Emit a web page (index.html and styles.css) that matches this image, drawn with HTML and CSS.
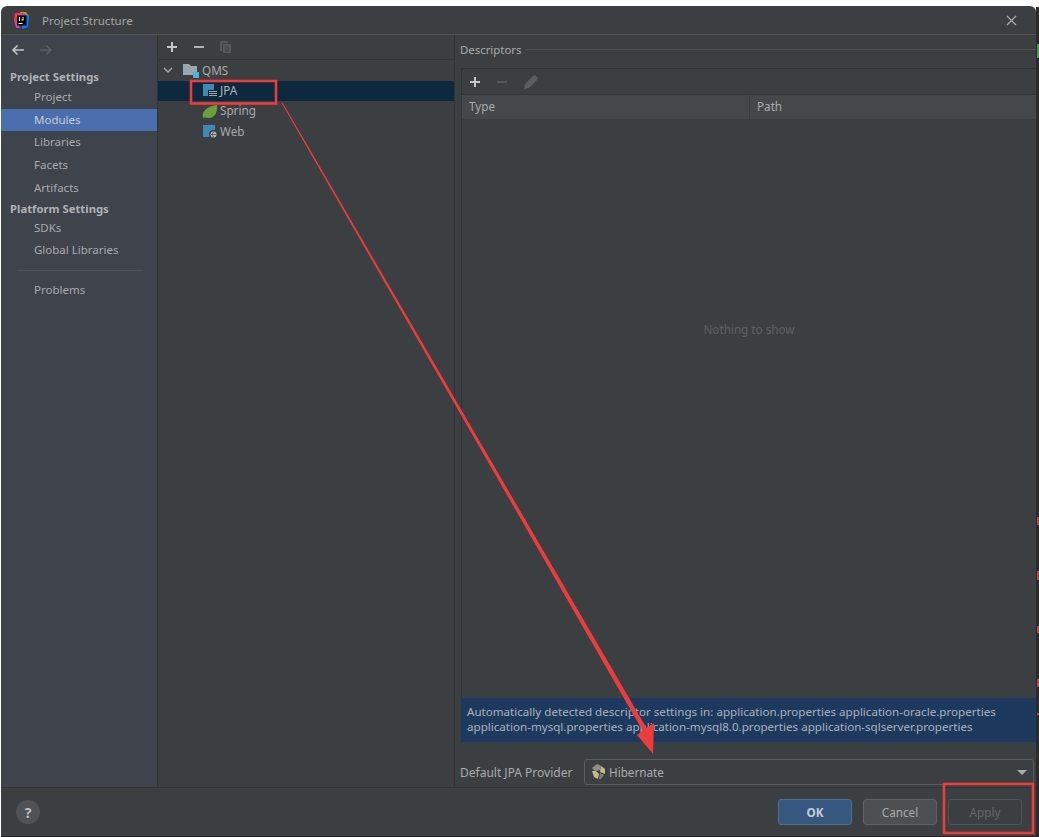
FILE: index.html
```html
<!DOCTYPE html>
<html lang="en">
<head>
<meta charset="utf-8">
<title>Project Structure</title>
<link rel="stylesheet" href="styles.css">
</head>
<body>
<div class="stage">
  <div class="dialog">
    <header class="titlebar">
      <svg class="applogo" width="17" height="17" viewBox="0 0 17 17">
        <path d="M7 0h6l3 4-2 4-6-2z" fill="#f97a12"/>
        <path d="M9 1l7 3-1 11-6 2z" fill="#087cfa"/>
        <path d="M2 1h7L6 16H3L1 8z" fill="#fe315d"/>
        <path d="M1 8l3 8h3z" fill="#b74af7"/>
        <rect x="4" y="3.500" width="9.500" height="10" fill="#000"/>
        <rect x="5.500" y="11" width="4" height="1" fill="#fff"/>
        <rect x="6" y="5" width="1" height="4" fill="#fff"/>
        <path d="M9.500 5h1v3.500h-2v-1h1z" fill="#fff"/>
      </svg>
      <span class="title">Project Structure</span>
      <svg class="close" width="11" height="11" viewBox="0 0 11 11"><path d="M1 1l9 9M10 1l-9 9" stroke="#a9abac" stroke-width="1.200"/></svg>
    </header>
    <div class="body">
      <nav class="sidebar">
        <div class="navarrows">
          <svg width="14" height="12" viewBox="0 0 14 12"><path d="M13 6H2M6.500 1.500L2 6l4.500 4.500" fill="none" stroke="#c4c6c8" stroke-width="1.600"/></svg>
          <svg width="14" height="12" viewBox="0 0 14 12"><path d="M1 6h11M7.500 1.500L12 6l-4.500 4.500" fill="none" stroke="#5c6063" stroke-width="1.600"/></svg>
        </div>
        <div class="navhead first">Project Settings</div>
        <div class="navitem project">Project</div>
        <div class="navitem active">Modules</div>
        <div class="navitem">Libraries</div>
        <div class="navitem">Facets</div>
        <div class="navitem">Artifacts</div>
        <div class="navhead second">Platform Settings</div>
        <div class="navitem sdk">SDKs</div>
        <div class="navitem">Global Libraries</div>
        <div class="navsep"></div>
        <div class="navitem">Problems</div>
      </nav>
      <section class="tree">
        <div class="treetools">
          <svg width="12" height="12" viewBox="0 0 12 12"><path d="M6 1v10M1 6h10" stroke="#c4c6c8" stroke-width="2"/></svg>
          <svg width="12" height="12" viewBox="0 0 12 12"><path d="M1 6h10" stroke="#b0b2b4" stroke-width="2"/></svg>
          <svg width="13" height="14" viewBox="0 0 13 14"><path d="M1 1h8v2H3v8H1z" fill="#55595b"/><path d="M4 4h8v9H4z" fill="#55595b"/><path d="M6 7h4M6 9h4M6 11h4" stroke="#3c3f41"/></svg>
        </div>
        <div class="treerow">
          <svg class="chev" width="10" height="7" viewBox="0 0 10 7"><path d="M1 1l4 4 4-4" fill="none" stroke="#a9abac" stroke-width="1.300"/></svg>
          <svg class="ticon" width="16" height="15" viewBox="0 0 16 15"><path d="M0 1h6l2 2h6v9H0z" fill="#9aa7b0"/><rect x="10" y="9" width="6" height="6" fill="#40b6e0"/></svg>
          <span>QMS</span>
        </div>
        <div class="treerow selected indent">
          <svg class="ticon" width="16" height="15" viewBox="0 0 16 15"><rect x="1" y="1" width="11" height="12" fill="#3d8bb5"/><path d="M6 7h10v8H6z" fill="#0d293e"/><path d="M7 8.500h8M7 10.500h8M7 12.500h8" stroke="#9aa7b0"/></svg>
          <span>JPA</span>
        </div>
        <div class="treerow indent">
          <svg class="ticon" width="16" height="15" viewBox="0 0 16 15"><path d="M1 14C-1 7 6 2 15 1c1 8-3 13-9 13-2 0-4-1-5 0z" fill="#6a9f3a"/></svg>
          <span>Spring</span>
        </div>
        <div class="treerow indent">
          <svg class="ticon" width="16" height="15" viewBox="0 0 16 15"><rect x="1" y="1" width="12" height="12" fill="#3d8bb5"/><circle cx="11.500" cy="10.500" r="4.500" fill="#3c3f41"/><circle cx="11.500" cy="10.500" r="3" fill="#b4b8ba"/><path d="M9 10.500h5M11.500 8c-1.500 1.500-1.500 3.500 0 5" fill="none" stroke="#3c3f41" stroke-width=".7"/></svg>
          <span>Web</span>
        </div>
      </section>
      <section class="detail">
        <div class="grouptitle"><span>Descriptors</span><i></i></div>
        <div class="tablebox">
          <div class="tabletools">
            <svg width="12" height="12" viewBox="0 0 12 12"><path d="M6 1v10M1 6h10" stroke="#c4c6c8" stroke-width="2"/></svg>
            <svg width="12" height="12" viewBox="0 0 12 12"><path d="M1 6h10" stroke="#55595b" stroke-width="2"/></svg>
            <svg width="16" height="16" viewBox="0 0 16 16"><path d="M1 15l1-5 8-8c1-1 2-1 3 0l1 1c1 1 1 2 0 3l-8 8z" fill="#5a5e60"/></svg>
          </div>
          <div class="tablehead"><div class="coltype">Type</div><div class="colpath">Path</div></div>
          <div class="tablebody">Nothing to show</div>
        </div>
        <div class="notice">Automatically detected descriptor settings in: application.properties application-oracle.properties<br>application-mysql.properties application-mysql8.0.properties application-sqlserver.properties</div>
        <div class="provider">
          <label>Default JPA Provider</label>
          <div class="combo">
            <svg width="15" height="16" viewBox="0 0 15 16"><path d="M6 0l4 2-1 4-5 1-3-3z" fill="#8f8f86"/><path d="M10 2l4 3 0 5-5-2z" fill="#c9b887"/><path d="M1 7l4 0 3 3-1 5-4-2z" fill="#c9b887"/><path d="M9 9l4 2-3 4-2 0z" fill="#7c7c74"/></svg>
            <span>Hibernate</span>
            <b class="caret"></b>
          </div>
        </div>
      </section>
    </div>
    <footer class="footer">
      <div class="help">?</div>
      <div class="buttons">
        <div class="btn primary">OK</div>
        <div class="btn">Cancel</div>
        <div class="btn disabled">Apply</div>
      </div>
    </footer>
  </div>
  <div class="edge">
    <i class="mark green"></i><i class="mark red r1"></i><i class="mark red r2"></i><i class="mark red r3"></i><i class="mark red r4"></i><i class="mark red r5"></i>
  </div>
  <svg class="overlay" width="1039" height="837" viewBox="0 0 1039 837">
    <rect x="191" y="81" width="85" height="22.500" fill="none" stroke="#ee3b3b" stroke-width="2.600"/>
    <rect x="944" y="784" width="89" height="49" fill="none" stroke="#ee3b3b" stroke-width="2.600"/>
    <path d="M281.500 103 L282.500 102.500 L646.500 728 L654 723 L653 754 L637 735 L642.500 730.500 Z" fill="#ee3b3b"/>
  </svg>
</div>
</body>
</html>
```
FILE: styles.css
```css
* { box-sizing: border-box; }
html, body { margin: 0; padding: 0; background: #fff; }
body { font-family: "Noto Sans", "Open Sans", sans-serif; font-size: 11.700px; color: #a9abac; }
.stage { position: relative; width: 1039px; height: 837px; overflow: hidden; display: flex; padding: 6px 0 0 1px; }
.dialog { width: 1035px; height: 831px; background: #3c3f41; display: flex; flex-direction: column; border-radius: 6px 6px 0 0; border-bottom: 1px solid #2b2b2b; }
.titlebar { height: 29px; flex: none; display: flex; align-items: center; padding: 0 19px 0 12px; border-bottom: 1px solid #515456; }
.applogo { flex: none; }
.title { margin-left: 12px; color: #a5a7a8; font-size: 11.500px; }
.close { margin-left: auto; }
.body { flex: 1; display: flex; min-height: 0; }
.sidebar { width: 157px; flex: none; background: #3e434c; border-right: 1px solid #323232; display: flex; flex-direction: column; }
.navarrows { height: 29px; display: flex; align-items: center; gap: 14px; padding-left: 10px; flex: none; }
.navhead { font-weight: 700; padding-left: 9px; color: #b0b2b4; height: 20px; line-height: 20px; font-size: 11.300px; flex: none; }
.navhead.first { margin-top: 3px; }
.navitem { height: 23px; line-height: 22px; padding-left: 33px; color: #a9abac; flex: none; font-size: 11.500px; }
.navitem.project { height: 22px; line-height: 19px; }
.navitem.active { background: #4b6eaf; color: #c6cbd6; height: 22px; line-height: 22px; }
.navitem.sdk { height: 20px; line-height: 18px; }
.navhead.second { margin-top: -1px; }
.navsep { height: 1px; background: #50545a; margin: 8px 14px 8px 16px; flex: none; }
.tree { width: 297px; flex: none; border-right: 1px solid #323232; }
.treetools { height: 25px; display: flex; align-items: center; gap: 15px; padding-left: 8px; border-bottom: 1px solid #323537; }
.treetools svg:last-child { margin-left: -1px; }
.treerow { height: 20.500px; display: flex; align-items: center; padding-left: 5px; color: #a9abac; white-space: nowrap; }
.treerow .chev { margin-right: 10px; }
.treerow .ticon { margin-right: 3px; flex: none; }
.treerow.indent { padding-left: 44px; }
.treerow.indent span { margin-top: -2px; margin-left: -1px; }
.selected { background: #0d293e; color: #b3b7ba; }
.detail { flex: 1; display: flex; flex-direction: column; padding-left: 5px; min-width: 0; }
.grouptitle { height: 29px; flex: none; display: flex; align-items: center; gap: 5px; color: #a9abac; font-size: 11.400px; }
.grouptitle i { flex: 1; height: 1px; background: #4e5254; }
.tablebox { flex: 1; border: 1px solid #323537; border-right: 0; border-bottom: 0; margin-top: 4px; margin-left: 1px; display: flex; flex-direction: column; min-height: 0; }
.tabletools { height: 26px; flex: none; display: flex; align-items: center; gap: 15px; padding-left: 7px; border-bottom: 1px solid #323537; }
.tablehead { height: 24px; flex: none; display: flex; background: #45484a; line-height: 22px; }
.coltype { width: 288px; padding-left: 7px; border-right: 1px solid #3a3d3f; }
.colpath { padding-left: 7px; }
.tablebody { flex: 1; display: flex; align-items: center; justify-content: center; color: #5e6163; padding-bottom: 159px; }
.notice { height: 44px; flex: none; background: #1d3a5e; color: #a9b2bc; margin-left: 1px; padding: 6px 6px 0; line-height: 15px; font-size: 11.600px; white-space: nowrap; overflow: hidden; }
.provider { height: 45px; flex: none; display: flex; align-items: center; padding-top: 15px; padding-right: 2px; }
.provider label { width: 124px; flex: none; white-space: nowrap; font-size: 12px; }
.combo { flex: 1; height: 26px; border: 1px solid #5a5d5f; border-radius: 3px; display: flex; align-items: center; padding: 0 6px 0 6px; gap: 3px; background: #3c3f41; }
.caret { margin-left: auto; border: 5px solid transparent; border-top: 5px solid #a9abac; border-bottom: 0; }
.footer { height: 49px; flex: none; display: flex; align-items: center; justify-content: space-between; padding: 0 14px 0 15px; border-top: 1px solid #323537; }
.help { width: 24px; height: 24px; border-radius: 50%; background: #505355; color: #bfc1c2; font-weight: 700; font-size: 14px; display: flex; align-items: center; justify-content: center; }
.buttons { display: flex; gap: 11px; }
.btn { width: 74px; height: 26px; border-radius: 3px; border: 1px solid #5e6163; background: #4c5052; color: #a9abac; display: flex; align-items: center; justify-content: center; }
.btn.primary { background: #365880; border-color: #4c708c; color: #c4cdd6; font-weight: 700; }
.btn.disabled { background: #3c3f41; border-color: #515456; color: #65686a; }
.edge { width: 3px; height: 831px; background: #2b2b2b; position: relative; margin-top: 1px; }
.mark { position: absolute; right: 0; width: 2px; }
.green { top: 37px; height: 14px; background: #4a9a4a; }
.red { background: #a8504f; }
.r1 { top: 510px; height: 8px; }
.r2 { top: 564px; height: 9px; }
.r3 { top: 619px; height: 7px; }
.r4 { top: 672px; height: 8px; }
.r5 { top: 706px; height: 2px; }
.overlay { position: absolute; left: 0; top: 0; pointer-events: none; }
```
